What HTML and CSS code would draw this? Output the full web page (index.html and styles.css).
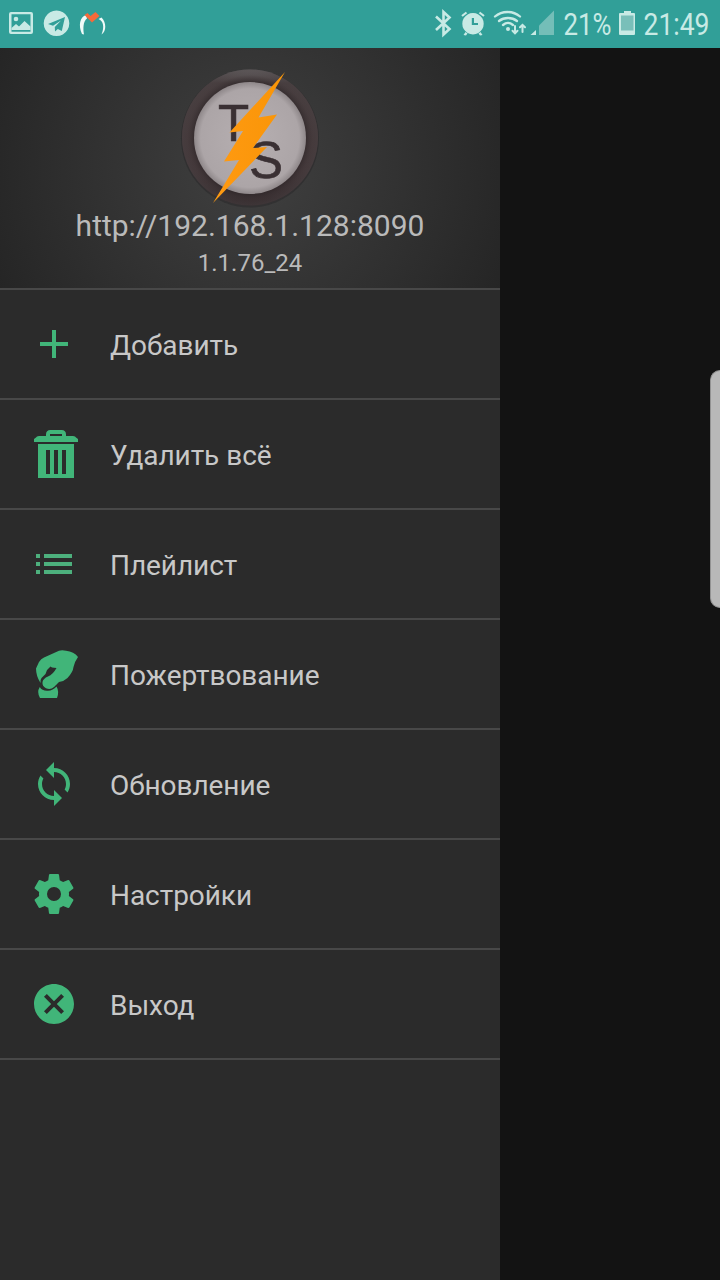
FILE: index.html
```html
<!DOCTYPE html>
<html lang="ru">
<head>
<meta charset="utf-8">
<title>TorrServe</title>
<link rel="stylesheet" href="styles.css">
</head>
<body>
<header class="status">
  <svg class="status-left" width="120" height="48" viewBox="0 0 120 48">
    <g class="pale">
      <path fill-rule="evenodd" d="M11 12h20a2 2 0 0 1 2 2v18a2 2 0 0 1-2 2H11a2 2 0 0 1-2-2V14a2 2 0 0 1 2-2zm.5 2.200v17.600h19V14.200z"/>
      <circle cx="16" cy="19" r="2.300"/>
      <path d="M11.500 30v-2l4.500-4 3 2.500 5.500-5.500 6 5.500V30z"/>
      <path fill-rule="evenodd" d="M56.500 10.500a12.800 12.800 0 1 0 .01 0zM65 17 48 24l5 1.700 8-5.200-6.200 6.500.2 4.500 2.800-2.600 4 2z"/>
    </g>
    <g class="white">
      <path d="M86 15c-6 2-8 10-4 19l2 .5c-1-6-1-13 3-16zM98.500 19c5 2 6 8 3 15.500 5-3 5-12 0-17z"/>
    </g>
    <path class="orange" d="m84.500 15 3-2 3 3 5-4 4 4-7.500 6.500z"/>
  </svg>
  <div class="status-right">
    <svg width="140" height="48" viewBox="425 0 140 48">
      <path class="stroke-pale" stroke-width="2.600" d="m436 16.500 13.500 12.500-6 5.500V12l6 5.500L436 30"/>
      <g class="pale">
        <path fill-rule="evenodd" d="M473 13a10.700 10.700 0 1 0 .01 0zm-1.200 5h2.200v5h4v2h-6.200z"/>
        <path d="m465.500 32 2 1.500-1.500 2-2.500-.5zM480.500 32l-2 1.500 1.500 2 2.500-.5z"/>
      </g>
      <path class="stroke-pale" stroke-width="2.200" d="m462 16 4.500-3.500M484 16l-4.500-3.500"/>
      <g class="stroke-pale round">
        <path stroke-width="2.300" d="M495 16.500c7-6 18-6 25 0M499 21c5-4 13-4 18 0M503 25c3-2.500 7-2.500 10 0"/>
        <path stroke-width="2" d="M515 26v7m-2.500-2.200 2.500 2.500 2.500-2.500M522.500 32v-7m-2.500 2.300 2.500-2.500 2.500 2.500"/>
      </g>
      <circle class="pale" cx="508" cy="29" r="2"/>
      <path class="pale" d="M536 30v5h-5.500z"/>
      <path class="faint" d="M554 10.500V35h-15v-9.500z"/>
    </svg>
    <svg class="percent" width="50" height="48" viewBox="563 0 50 48">
      <text x="563.500" y="35" textLength="48" lengthAdjust="spacingAndGlyphs">21%</text>
    </svg>
    <svg class="battery" width="16" height="48" viewBox="619 0 16 48">
      <path class="pale" d="M624 11h7v2h3q1 0 1 1v20q0 1-1 1h-14q-1 0-1-1V14q0-1 1-1h4z"/>
      <path class="teal" d="M621 15.500h12.500v15H621z"/>
    </svg>
    <svg class="clock" width="68" height="48" viewBox="643 0 68 48">
      <text x="643.500" y="35" textLength="66" lengthAdjust="spacingAndGlyphs">21:49</text>
    </svg>
  </div>
</header>
<div class="screen">
  <nav class="drawer">
    <div class="hero">
      <svg class="logo" width="160" height="150" viewBox="0 0 160 150">
        <defs>
          <linearGradient id="rim" x1="0" y1="0" x2="0" y2="1"><stop offset="0" stop-color="#6a6869"/><stop offset=".1" stop-color="#463d3e"/><stop offset=".75" stop-color="#403537"/><stop offset="1" stop-color="#30282a"/></linearGradient>
          <radialGradient id="face"><stop offset="0" stop-color="#b6afb1"/><stop offset=".88" stop-color="#aca5a7"/><stop offset="1" stop-color="#8e8789"/></radialGradient>
          <radialGradient id="edge"><stop offset=".82" stop-color="#2a2224" stop-opacity=".5"/><stop offset=".92" stop-color="#4b4042" stop-opacity=".3"/><stop offset="1" stop-color="#4b4244" stop-opacity=".5"/></radialGradient>
          <linearGradient id="bolt"><stop offset="0" stop-color="#ff9a12"/><stop offset="1" stop-color="#f99507"/></linearGradient>
        </defs>
        <circle class="shadow" cx="80" cy="78.500" r="69"/>
        <circle cx="80" cy="77.500" r="68" fill="url(#rim)"/>
        <circle cx="80" cy="77.500" r="68" fill="url(#edge)"/>
        <circle cx="80" cy="78" r="56" fill="url(#face)"/>
        <text class="letter" x="48" y="81" font-size="51">T</text>
        <text class="letter" x="79" y="117.500" font-size="51">S</text>
        <path fill="url(#bolt)" d="M115 12 88.500 57.500 107 54.500 83 88 97 87 43 143 69 100 54 101.500 73 71 59.500 72.500z"/>
      </svg>
      <div class="url">http://192.168.1.128:8090</div>
      <div class="version">1.1.76_24</div>
    </div>
    <ul class="menu">
      <li class="item"><svg class="icon" viewBox="0 0 24 24"><path d="M19 13h-6v6h-2v-6H5v-2h6V5h2v6h6z"/></svg><span class="label">Добавить</span></li>
      <li class="item"><svg class="icon" viewBox="0 0 48 48"><path fill-rule="evenodd" d="M6 7.500Q6.500 6 9 6h7V4.500Q16 0 20.500 0h11Q36 0 36 4.500V6h7q2.500 0 3 1.500l2 1.500v3H4V9zM20 6h12V4H20zM8 14h36v34H8zm8 6v24h4V20zm8 0v24h4V20zm8 0v24h4V20z"/></svg><span class="label">Удалить всё</span></li>
      <li class="item"><svg class="icon list" viewBox="0 0 24 24"><path d="M3 7h2v2H3zm4 0h14v2H7zm-4 4h2v2H3zm4 0h14v2H7zm-4 4h2v2H3zm4 0h14v2H7z"/></svg><span class="label">Плейлист</span></li>
      <li class="item"><svg class="icon" viewBox="0 0 48 48"><path d="M6 18.500 9 12Q11 8.500 14 7.500L29 .8Q32-.2 36 .8q8 1 12 6.200Q45 11 43.500 17 43 22 37.500 28q-3 3-8.500 4L24 37q-3.500 3-8 1.200-4-2-3.500-6.200.7-3.500 5.500-5.500 5-2 8.500-8.500L22 17.500l-1.500-1-3.500 3.500-1.500 4-4 4Q10 30 10.500 33 6 26 6 18.500z"/><path d="M9.800 37q2.200 4.200 8.200 3.800 5-.3 8.500-4.300 3 5 .5 11.500H10q-3.500-6-.2-11z"/></svg><span class="label">Пожертвование</span></li>
      <li class="item"><svg class="icon" viewBox="0 0 24 24"><path d="M12 4V1L8 5l4 4V6c3.310 0 6 2.690 6 6 0 1.010-.25 1.970-.7 2.800l1.460 1.460C19.540 15.030 20 13.570 20 12c0-4.420-3.580-8-8-8zm0 14c-3.310 0-6-2.690-6-6 0-1.010.25-1.970.7-2.800L5.240 7.740C4.460 8.970 4 10.430 4 12c0 4.420 3.580 8 8 8v3l4-4-4-4z"/></svg><span class="label">Обновление</span></li>
      <li class="item"><svg class="icon" viewBox="0 0 24 24"><path d="M12 15.500A3.500 3.500 0 0 1 8.500 12 3.500 3.500 0 0 1 12 8.500a3.500 3.500 0 0 1 3.500 3.500 3.500 3.500 0 0 1-3.500 3.500m7.430-2.530c.04-.32.07-.64.07-.97s-.03-.66-.07-1l2.110-1.630c.19-.15.24-.42.12-.64l-2-3.460c-.12-.22-.39-.31-.61-.22l-2.490 1c-.52-.39-1.060-.73-1.690-.98l-.37-2.650A.506.506 0 0 0 14 2h-4c-.25 0-.46.18-.5.420l-.37 2.650c-.63.250-1.170.590-1.690.980l-2.490-1c-.22-.09-.49 0-.61.220l-2 3.460c-.13.220-.07.490.12.640L4.570 11c-.04.340-.07.670-.07 1s.03.650.07.970l-2.110 1.660c-.19.150-.25.420-.12.640l2 3.460c.12.220.39.300.61.220l2.490-1.010c.52.400 1.060.740 1.690.990l.37 2.650c.04.240.25.420.5.420h4c.25 0 .46-.18.5-.42l.37-2.650c.63-.26 1.170-.59 1.690-.99l2.490 1.010c.22.080.49 0 .61-.22l2-3.460c.12-.22.07-.49-.12-.64z"/></svg><span class="label">Настройки</span></li>
      <li class="item"><svg class="icon" viewBox="0 0 24 24"><path d="M12 2C6.470 2 2 6.470 2 12s4.470 10 10 10 10-4.470 10-10S17.530 2 12 2zm5 13.590L15.590 17 12 13.410 8.410 17 7 15.590 10.590 12 7 8.410 8.410 7 12 10.590 15.590 7 17 8.410 13.410 12z"/></svg><span class="label">Выход</span></li>
    </ul>
  </nav>
  <main class="scrim"><div class="edge-handle"></div></main>
</div>
</body>
</html>
```
FILE: styles.css
```css
* { box-sizing: border-box; }
body {
  margin: 0;
  width: 720px;
  height: 1280px;
  overflow: hidden;
  display: flex;
  flex-direction: column;
  background: #131313;
  font-family: Roboto, "Noto Sans", sans-serif;
}
svg { display: block; flex: none; overflow: visible; }
.status {
  height: 48px;
  display: flex;
  justify-content: space-between;
  background: #319f98;
}
.status-right { display: flex; padding-right: 9px; }
.status text { font-size: 31px; fill: #c8eae5; }
.percent { margin-left: -2px; }
.battery { margin: 0 8px 0 6px; }
.pale { fill: #c8eae5; }
.white { fill: #f0fbf9; }
.orange { fill: #f56a3a; }
.faint { fill: #74beb8; }
.teal { fill: #79bfb9; }
.stroke-pale { fill: none; stroke: #c8eae5; }
.round { stroke-linecap: round; }
.screen { flex: 1; display: flex; }
.drawer { width: 500px; background: #2b2b2b; }
.hero {
  height: 242px;
  padding-top: 12px;
  border-bottom: 2px solid #484848;
  display: flex;
  flex-direction: column;
  align-items: center;
  color: #bababa;
  background: radial-gradient(circle 280px at 50% 50%, #404040, #252525);
}
.shadow { fill: #2c2a2b; opacity: .6; }
.letter {
  font-family: "Liberation Sans", Arial, sans-serif;
  fill: #3a3033;
  stroke: #3a3033;
  stroke-width: .6px;
}
.url { margin-top: -3px; font-size: 30px; line-height: 38px; }
.version { font-size: 24px; line-height: 36px; }
.menu { margin: 0; padding: 0; list-style: none; }
.item {
  height: 110px;
  padding-left: 30px;
  border-bottom: 2px solid #484848;
  display: flex;
  align-items: center;
  gap: 32px;
  color: #c8c8c8;
  font-size: 28px;
  line-height: 34px;
}
.label { padding-top: 3px; letter-spacing: -.05px; }
.icon { width: 48px; height: 48px; fill: #41b579; }
.list { fill: #4db07d; }
.scrim { flex: 1; display: flex; justify-content: flex-end; padding-top: 322px; }
.edge-handle {
  width: 10px;
  height: 238px;
  border: 1px solid #929292;
  border-right: 0;
  border-radius: 10px 0 0 10px;
  background: #b8b8b8;
}
```
